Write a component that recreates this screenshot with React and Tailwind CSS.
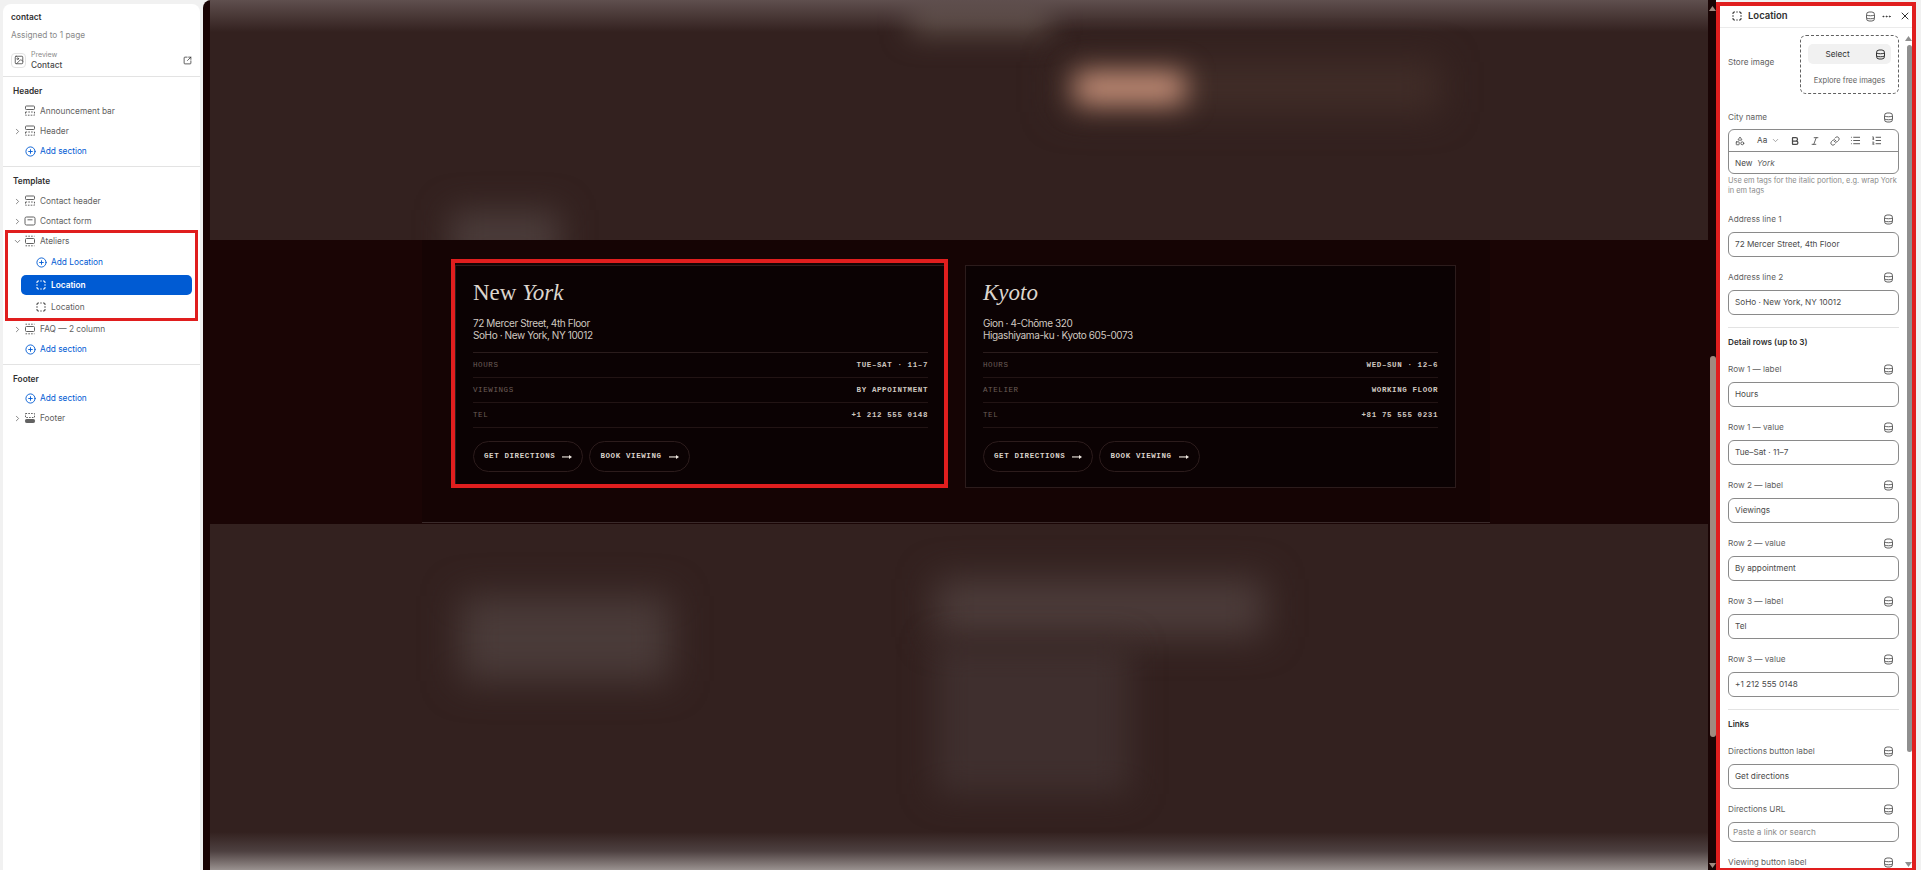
import React from 'react';
import { ChevronDown, ChevronRight, CirclePlus, Ellipsis, X, Bold, Italic, Link, List, ListOrdered, SquareArrowOutUpRight, Shapes, ImageIcon } from 'lucide-react';

const SectionIcon = ({ kind = 'top', className = 'text-[#616161]' }) => (
    <svg width="14" height="14" viewBox="0 0 14 14" fill="none" stroke="currentColor" strokeWidth="1" className={`shrink-0 ${className}`}>
        {kind === 'top' && <>
            <rect x="2.5" y="2" width="9" height="3.5" rx="0.8" />
            <path d="M2.5 8h9M2.5 8v3.2h9V8" strokeDasharray="1.6 1.2" />
        </>}
        {kind === 'mid' && <>
            <path d="M2.5 2.2h9" strokeDasharray="1.6 1.2" />
            <rect x="2.5" y="4.5" width="9" height="5" rx="1" />
            <path d="M2.5 11.8h9" strokeDasharray="1.6 1.2" />
        </>}
        {kind === 'form' && <>
            <rect x="2" y="3" width="10" height="8" rx="1.5" />
            <path d="M4.5 5.8h5" />
        </>}
        {kind === 'foot' && <>
            <path d="M2.5 2.5h9v4h-9z" strokeDasharray="1.6 1.2" />
            <rect x="2.5" y="8.5" width="9" height="3" rx="0.8" fill="currentColor" />
        </>}
    </svg>
);

const BlockIcon = ({ className }) => (
    <svg width="14" height="14" viewBox="0 0 14 14" fill="none" stroke="currentColor" strokeWidth="1.1" className={`shrink-0 ${className}`}>
        <path d="M3 5V4.2C3 3.5 3.5 3 4.2 3H5M9 3h.8c.7 0 1.2.5 1.2 1.2V5M11 9v.8c0 .7-.5 1.2-1.2 1.2H9M5 11h-.8C3.5 11 3 10.500 3 9.800V9M6.300 3h1.400M6.300 11h1.400M3 6.300v1.400M11 6.300v1.400" />
    </svg>
);

// dynamic source icon: stacked cylinder
const SourceGlyph = ({ className = 'text-[#616161]' }) => (
    <svg width="11" height="11" viewBox="0 0 11 11" fill="none" stroke="currentColor" strokeWidth="1" className={`shrink-0 ${className}`}>
        <rect x="1.500" y="1" width="8" height="9" rx="2.600" />
        <path d="M1.500 4c1.500 1 6.500 1 8 0M1.500 7c1.500 1 6.500 1 8 0" />
    </svg>
);

const ArrowIcon = () => (
    <svg width="10" height="6" viewBox="0 0 10 6" className="shrink-0 text-[#efe8e0]" fill="currentColor">
        <rect x="0" y="2.400" width="8" height="1.100" />
        <path d="M7 1l3 2-3 2z" />
    </svg>
);

const ScrollArrow = ({ down, className }) => (
    <svg width="7" height="5" viewBox="0 0 7 5" fill="currentColor" className={`absolute ${className}`}>
        <path d={down ? 'M0 0h7L3.500 5z' : 'M3.500 0L7 5H0z'} />
    </svg>
);

const TreeRow = ({ label, icon, chevron, open }) => (
    <div className="h-5 flex items-center pl-[8px] text-[#616161]">
        <span className="w-3 flex justify-center">
            {chevron && (open ? <ChevronDown size={9} /> : <ChevronRight size={9} />)}
        </span>
        <SectionIcon kind={icon} />
        <span className="ml-[3px]">{label}</span>
    </div>
);

const AddRow = ({ label, sub }) => (
    <div className={`h-5 flex items-center gap-[3px] text-[#005bd3] ${sub ? 'pl-[31px]' : 'pl-[20px]'}`}>
        <span className="w-[14px] flex justify-center"><CirclePlus size={11} /></span>
        <span>{label}</span>
    </div>
);

const SideBar = () => (
    <aside className="w-[197px] ml-[3px] mt-[4px] shrink-0 bg-white rounded-t-lg text-[8.300px]">
        <div className="h-[73px] border-b border-[#e3e3e3] pt-[7px] pl-[8px] pr-[8px]">
            <p className="h-3 leading-3 text-[#303030] font-semibold">contact</p>
            <p className="h-3 leading-3 mt-[6px] text-[#8a8a8a]">Assigned to 1 page</p>
            <div className="flex items-center mt-[9px]">
                <span className="w-[15px] h-[15px] rounded border border-[#e3e3e3] flex items-center justify-center text-[#4a4a4a]"><ImageIcon size={10} /></span>
                <div className="ml-[5px] flex-1">
                    <p className="text-[7px] leading-[10px] text-[#8a8a8a]">Preview</p>
                    <p className="leading-[10px] text-[#4a4a4a] font-medium">Contact</p>
                </div>
                <SquareArrowOutUpRight size={9} className="text-[#303030]" />
            </div>
        </div>

        <div className="border-b border-[#e3e3e3] pt-[8px] pb-[5px]">
            <p className="h-3 leading-3 mb-[4px] pl-[10px] text-[#303030] font-semibold">Header</p>
            <TreeRow label="Announcement bar" icon="top" />
            <TreeRow label="Header" icon="top" chevron />
            <AddRow label="Add section" />
        </div>

        <div className="border-b border-[#e3e3e3] pt-[8px] pb-[5px]">
            <p className="h-3 leading-3 mb-[4px] pl-[10px] text-[#303030] font-semibold">Template</p>
            <TreeRow label="Contact header" icon="top" chevron />
            <TreeRow label="Contact form" icon="form" chevron />
            <div className="relative">
                <TreeRow label="Ateliers" icon="mid" chevron open />
                <div className="mt-[1px]"><AddRow label="Add Location" sub /></div>
                <div className="mt-[3px] ml-[18px] mr-[8px] h-5 rounded-[5px] bg-[#005bd3] text-white font-semibold flex items-center pl-[13px]">
                    <BlockIcon className="text-white" />
                    <span className="ml-[3px]">Location</span>
                </div>
                <div className="mt-[2px] h-5 flex items-center pl-[31px] text-[#616161]">
                    <BlockIcon className="text-[#4a4a4a]" />
                    <span className="ml-[3px]">Location</span>
                </div>
                <div className="absolute left-[2px] right-[2px] -top-[1px] h-[91px] border-[3px] border-[#e01e1e] pointer-events-none" />
            </div>
            <div className="mt-[2px]"><TreeRow label="FAQ — 2 column" icon="mid" chevron /></div>
            <AddRow label="Add section" />
        </div>

        <div className="pt-[8px]">
            <p className="h-3 leading-3 mb-[3px] pl-[10px] text-[#303030] font-semibold">Footer</p>
            <AddRow label="Add section" />
            <TreeRow label="Footer" icon="foot" chevron />
        </div>
    </aside>
);

const PillButton = ({ label }) => (
    <span className="h-[31px] px-[10px] rounded-full border border-[#2c1c1c] flex items-center gap-[7px] text-[7.500px] font-bold tracking-[0.6px] text-[#d8d0c8] uppercase">
        {label}
        <ArrowIcon />
    </span>
);

const AtelierCard = ({ title, address, rows, marked }) => (
    <div className="relative h-[223px] border border-[#2c1c1c] bg-[#0b0203] px-[17px] pt-[14px]" >
        <h3 className="h-[26px] leading-[26px] text-[23px] text-[#dcd5cd]" style={{ fontFamily: '"Liberation Serif", serif' }}>{title}</h3>
        <div className="mt-[11px] text-[10px] leading-3 text-[#d0c8c0] tracking-[-0.4px]" style={{ fontFamily: 'Inter, sans-serif' }}>
            {address.map((line) => <p key={line}>{line}</p>)}
        </div>
        <div className="mt-[11px] border-t border-[#2a1c1c]">
            {rows.map(([label, value]) => (
                <div key={label} className="h-[25px] pt-[1px] flex items-center justify-between border-b border-[#221414] text-[7.500px] tracking-[0.6px] uppercase">
                    <span className="text-[#6b5e58]">{label}</span>
                    <span className="font-bold text-[#d0c8c0] whitespace-pre">{value}</span>
                </div>
            ))}
        </div>
        <div className="mt-[13px] flex gap-[6px]">
            <PillButton label="Get directions" />
            <PillButton label="Book viewing" />
        </div>
        {marked && <div className="absolute -left-[5px] -right-[3px] -top-[7px] bottom-[-1px] border-[4px] border-[#e01e1e] pointer-events-none" />}
    </div>
);

const Canvas = () => (
    <main className="w-[1513px] ml-[3px] shrink-0 h-full bg-[#1a0505] flex rounded-tl-lg overflow-hidden" style={{ fontFamily: '"Liberation Mono", monospace' }}>
        <div className="w-[1498px] ml-[7px] h-full flex flex-col">
            {/* blurred page content above the section */}
            <div className="relative h-[240px] bg-[#33211f] overflow-hidden">
                <div className="absolute left-[700px] -top-[10px] w-[140px] h-[45px] bg-[#5a4a44] blur-[14px]" />
                <div className="absolute inset-x-0 top-0 h-[32px] bg-gradient-to-b from-[#5f4f4e] to-transparent" />
                <div className="absolute left-[850px] top-[62px] w-[380px] h-[50px] bg-[#412d28] blur-[18px]" />
                <div className="absolute left-[865px] top-[72px] w-[110px] h-[32px] bg-[#c8917a] blur-[14px]" />
                <div className="absolute left-[240px] top-[210px] w-[110px] h-[60px] bg-[#4a3b39] blur-[16px]" />
            </div>

            <section className="h-[284px] bg-[#1a0505]">
                <div className="w-[1068px] ml-[212px] h-[283px] border-b border-[#3a2a2a] bg-[#150404] pl-[33px] pr-[34px] pt-[25px]">
                    <div className="grid grid-cols-2 gap-[19px]">
                        <AtelierCard
                            marked
                            title={<>New <em>York</em></>}
                            address={['72 Mercer Street, 4th Floor', 'SoHo · New York, NY 10012']}
                            rows={[['Hours', 'Tue–Sat · 11–7'], ['Viewings', 'By appointment'], ['Tel', '+1 212 555 0148']]}
                        />
                        <AtelierCard
                            title={<em>Kyoto</em>}
                            address={['Gion · 4-Chōme 320', 'Higashiyama-ku · Kyoto 605-0073']}
                            rows={[['Hours', 'Wed–Sun · 12–6'], ['Atelier', 'Working floor'], ['Tel', '+81 75 555 0231']]}
                        />
                    </div>
                </div>
            </section>

            {/* blurred page content below the section */}
            <div className="relative flex-1 bg-[#33211f] overflow-hidden">
                <div className="absolute left-[250px] top-[72px] w-[210px] h-[85px] bg-[#4a3b39] blur-[18px]" />
                <div className="absolute left-[725px] top-[55px] w-[330px] h-[58px] bg-[#4c3c3a] blur-[18px]" />
                <div className="absolute left-[725px] top-[120px] w-[195px] h-[150px] bg-[#3f2f2e] blur-[16px]" />
                <div className="absolute inset-x-0 bottom-0 h-[38px] bg-gradient-to-b from-transparent via-[#4d4040] to-[#9a9290]" />
            </div>
        </div>
        <div className="relative w-[8px] pl-[2px]">
            <ScrollArrow className="left-[1px] top-[6px] text-[#a08a80]" />
            <div className="w-[6px] mt-[356px] h-[381px] rounded-full bg-[#a08a80]" />
            <ScrollArrow down className="left-[1px] bottom-[2px] text-[#a08a80]" />
        </div>
    </main>
);

const FieldLabel = ({ label }) => (
    <div className="h-[14px] flex items-center justify-between pr-[5px] text-[#616161]">
        <span>{label}</span>
        <SourceGlyph />
    </div>
);

const Field = ({ label, value, placeholder }) => (
    <div>
        <FieldLabel label={label} />
        {placeholder
            ? <div className="mt-[6px] h-5 rounded-[6px] border border-[#8a8a8a] flex items-center pl-[4px] text-[#8a8a8a]">{placeholder}</div>
            : <div className="mt-[6px] h-[25px] rounded-[6px] border border-[#8a8a8a] flex items-center pl-[6px] text-[#4a4a4a]">{value}</div>}
    </div>
);

const Divider = () => <div className="h-px -mt-[1px] bg-[#e3e3e3]" />;
const Heading = ({ children }) => <p className="h-[14px] -mt-[6px] leading-[14px] font-semibold text-[#303030]">{children}</p>;

const Inspector = () => (
    <aside className="relative w-[193px] ml-[4px] mt-[3px] shrink-0 bg-white text-[8.200px] flex flex-col overflow-visible">
        <div className="h-[25px] shrink-0 pt-[2px] border-b border-[#ebebeb] flex items-center pl-[10px] pr-[2px] text-[#303030]">
            <BlockIcon className="text-[#303030]" />
            <span className="ml-[4px] text-[9.500px] font-semibold">Location</span>
            <span className="ml-auto"><SourceGlyph /></span>
            <Ellipsis size={11} className="ml-[5px]" />
            <X size={12} className="ml-[7px]" />
        </div>
        <div className="relative flex-1 min-h-0 overflow-hidden flex">
            <div className="w-[179px] pl-[8px] shrink-0 pt-[7px] flex flex-col gap-[13px]">
                <div className="flex items-center justify-between">
                    <span className="text-[#616161] pb-[4px]">Store image</span>
                    <div className="w-[99px] h-[59px] rounded-[6px] border border-dashed border-[#616161] pt-[8px] px-[7px]">
                        <div className="h-5 rounded-[5px] bg-[#f1f1f1] flex items-center justify-center pr-[24px] relative text-[#303030]">
                            Select
                            <SourceGlyph className="absolute right-[5px] text-[#303030]" />
                        </div>
                        <p className="text-center mt-[11px] text-[7.600px] text-[#616161]">Explore free images</p>
                    </div>
                </div>

                <div className="mt-[3px]">
                    <FieldLabel label="City name" />
                    <div className="mt-[5px] h-[45px] rounded-[6px] border border-[#8a8a8a] overflow-hidden">
                        <div className="h-[22px] border-b border-[#8a8a8a] flex items-center pl-[6px] gap-[10px] text-[#4a4a4a]">
                            <Shapes size={10} />
                            <span className="flex items-center gap-[3px] ml-[2px]">Aa <ChevronDown size={9} className="ml-[1px] text-[#8a8a8a]" /></span>
                            <Bold size={10} strokeWidth={3} />
                            <Italic size={10} />
                            <Link size={10} />
                            <List size={11} />
                            <ListOrdered size={11} />
                        </div>
                        <div className="h-[22px] flex items-center pl-[6px] text-[#4a4a4a]">New&nbsp;&nbsp;<em className="text-[#616161]">York</em></div>
                    </div>
                    <p className="mt-[2px] text-[7.400px] leading-[10px] text-[#8a8a8a]">Use em tags for the italic portion, e.g. wrap York in em tags</p>
                </div>

                <div className="mt-[3px]"><Field label="Address line 1" value="72 Mercer Street, 4th Floor" /></div>
                <Field label="Address line 2" value="SoHo · New York, NY 10012" />
                <Divider />
                <Heading>Detail rows (up to 3)</Heading>
                <Field label="Row 1 — label" value="Hours" />
                <Field label="Row 1 — value" value="Tue–Sat · 11–7" />
                <Field label="Row 2 — label" value="Viewings" />
                <Field label="Row 2 — value" value="By appointment" />
                <Field label="Row 3 — label" value="Tel" />
                <Field label="Row 3 — value" value="+1 212 555 0148" />
                <Divider />
                <Heading>Links</Heading>
                <Field label="Directions button label" value="Get directions" />
                <Field label="Directions URL" placeholder="Paste a link or search" />
                <FieldLabel label="Viewing button label" />
            </div>
            <div className="ml-[8px] w-[5px] mt-[17px] h-[707px] rounded-full bg-[#8f8f8f]" />
            <ScrollArrow className="right-[1px] top-[8px] text-[#8f8f8f]" />
            <ScrollArrow down className="right-[1px] bottom-[3px] text-[#8f8f8f]" />
        </div>
        <div className="absolute -left-[4px] -right-[3px] -top-[1px] -bottom-[2px] border-[4px] border-[#e01e1e] pointer-events-none" />
    </aside>
);

export default function App() {
    return (
        <div className="w-full h-screen bg-[#f1f1f1] flex overflow-hidden" style={{ fontFamily: 'Inter, "Noto Sans", sans-serif' }}>
            <SideBar />
            <Canvas />
            <Inspector />
        </div>
    );
}
